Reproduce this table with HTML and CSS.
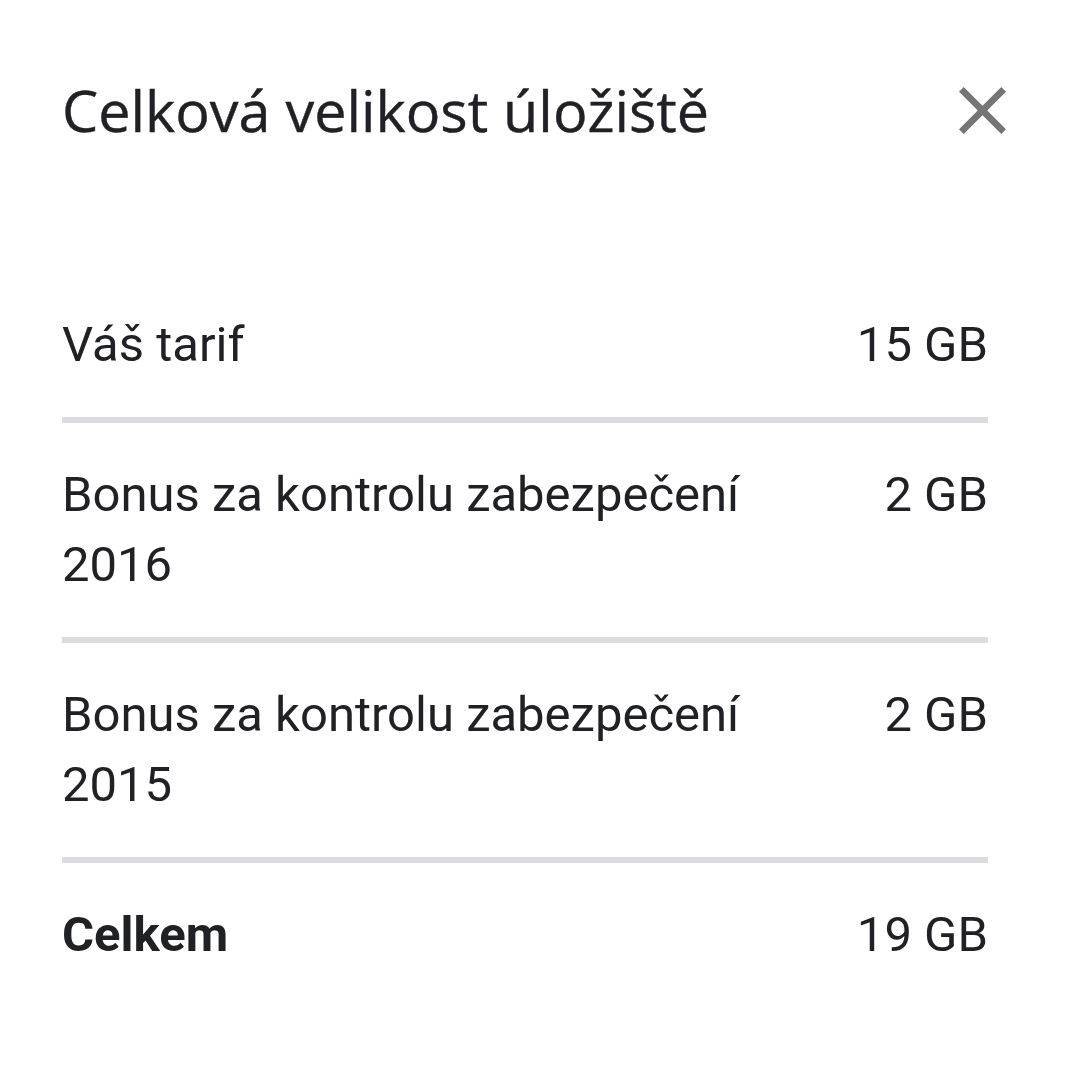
FILE: index.html
```html
<!DOCTYPE html>
<html lang="cs">
<head>
<meta charset="utf-8">
<link rel="stylesheet" href="styles.css">
</head>
<body>
<div class="dialog">
  <div class="header">
    <h1 class="title">Celková velikost úložiště</h1>
    <button class="close" aria-label="Zavřít">
      <svg viewBox="5 5 14 14" width="47" height="47"><path fill="#757575" d="M19 6.41L17.59 5 12 10.59 6.41 5 5 6.41 10.59 12 5 17.59 6.41 19 12 13.41 17.59 19 19 17.59 13.41 12z"/></svg>
    </button>
  </div>
  <div class="list">
    <div class="row">
      <div class="label">Váš tarif</div>
      <div class="value">15 GB</div>
    </div>
    <div class="row">
      <div class="label">Bonus za kontrolu zabezpečení 2016</div>
      <div class="value">2 GB</div>
    </div>
    <div class="row">
      <div class="label">Bonus za kontrolu zabezpečení 2015</div>
      <div class="value">2 GB</div>
    </div>
    <div class="row total">
      <div class="label">Celkem</div>
      <div class="value">19 GB</div>
    </div>
  </div>
</div>
</body>
</html>
```
FILE: styles.css
```css
html, body {
  margin: 0;
  padding: 0;
  background: #ffffff;
}
.dialog {
  width: 1080px;
  height: 1080px;
  box-sizing: border-box;
  padding: 65px 92px 0 62px;
  overflow: hidden;
  color: #202124;
  font-family: Roboto, "Liberation Sans", sans-serif;
}
.header {
  display: flex;
  align-items: center;
  justify-content: space-between;
  height: 90px;
}
.title {
  margin: 0;
  font-family: "Open Sans", Roboto, sans-serif;
  font-weight: 400;
  font-size: 57.5px;
  line-height: 90px;
  letter-spacing: 0;
  color: #202124;
  -webkit-text-stroke: 0.4px #202124;
}
.close {
  border: 0;
  background: none;
  padding: 0;
  width: 47px;
  height: 47px;
  display: flex;
  margin-right: -18px;
}
.list {
  margin-top: 155px;
}
.row {
  display: flex;
  justify-content: space-between;
  align-items: flex-start;
  gap: 40px;
  padding: 37px 0;
  border-bottom: 6px solid #dadce0;
  font-size: 49px;
  line-height: 70px;
}
.row:first-child {
  padding-top: 0;
}
.row.total {
  border-bottom: 0;
}
.row .label {
  max-width: 700px;
}
.row.total .label {
  font-weight: 700;
}
.value {
  white-space: nowrap;
  text-align: right;
}
```
